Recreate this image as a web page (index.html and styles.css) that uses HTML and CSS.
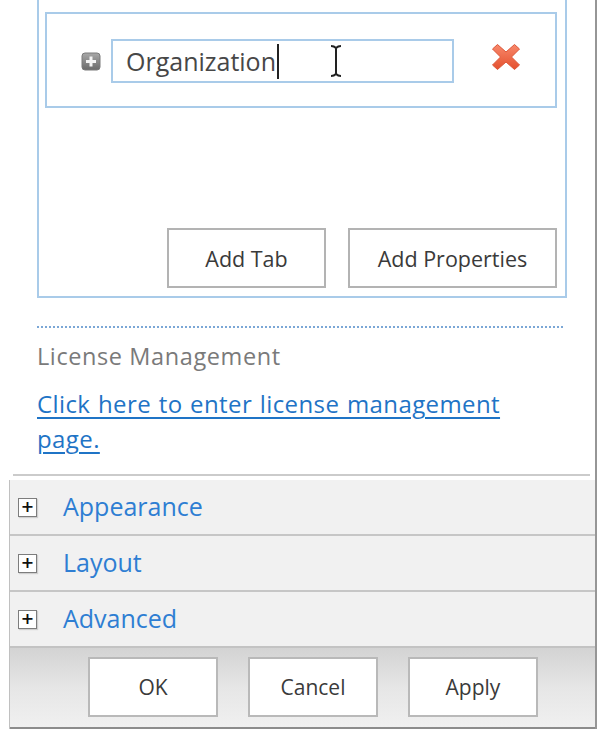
FILE: index.html
```html
<!DOCTYPE html>
<html>
<head>
<meta charset="utf-8">
<link rel="stylesheet" href="styles.css">
</head>
<body>
<div class="panel">
  <div class="tabbox">
    <div class="tabrow">
      <svg class="expand" width="20" height="19" viewBox="0 0 20 19">
        <defs>
          <linearGradient id="gg" x1="0" y1="0" x2="0" y2="1">
            <stop offset="0" stop-color="#a8a8a8"/>
            <stop offset="1" stop-color="#6a6a6a"/>
          </linearGradient>
        </defs>
        <rect x="1" y="1" width="18" height="17" rx="3" fill="url(#gg)" stroke="#7a7a7a" stroke-width="1"/>
        <path d="M8.5 4.5h3v3.5h3.5v3h-3.5v3.5h-3v-3.5h-3.5v-3h3.5z" fill="#f4f4f4"/>
      </svg>
      <div class="field"><span class="fieldtext">Organization</span><span class="caret"></span></div>
      <svg class="remove" width="30" height="28" viewBox="0 0 30 28">
        <defs>
          <linearGradient id="rg" x1="0" y1="0" x2="0" y2="1">
            <stop offset="0" stop-color="#f8886b"/>
            <stop offset="1" stop-color="#e4502e"/>
          </linearGradient>
        </defs>
        <path d="M1.5 6 L6.5 1.5 L15 9 L23.5 1.5 L28.5 6 L20.5 14 L28.5 22 L23.5 26.5 L15 19 L6.5 26.5 L1.5 22 L9.5 14 Z" fill="url(#rg)" stroke="#dc5638" stroke-width="1" stroke-linejoin="round"/>
      </svg>
    </div>
    <div class="tabactions">
      <button class="btn btn-tab">Add Tab</button>
      <button class="btn btn-props">Add Properties</button>
    </div>
  </div>
  <div class="dotted"></div>
  <div class="license">
    <div class="license-title">License Management</div>
    <a class="license-link" href="#">Click here to enter license management page.</a>
  </div>
  <div class="rule"></div>
  <div class="sections">
    <div class="section"><span class="plusbox">+</span><span class="section-label">Appearance</span></div>
    <div class="section"><span class="plusbox">+</span><span class="section-label">Layout</span></div>
    <div class="section"><span class="plusbox">+</span><span class="section-label">Advanced</span></div>
    <div class="footer">
      <button class="btn fbtn">OK</button>
      <button class="btn fbtn">Cancel</button>
      <button class="btn fbtn">Apply</button>
    </div>
  </div>
  <svg class="ibeam" width="14" height="34" viewBox="0 0 14 34">
    <path d="M2 2 Q5 2 7 4 Q9 2 12 2 M7 4 V30 M2 32 Q5 32 7 30 Q9 32 12 32" fill="none" stroke="#222" stroke-width="2"/>
  </svg>
</div>
</body>
</html>
```

FILE: styles.css
```css
html, body {
  margin: 0;
  padding: 0;
  background: #ffffff;
}
body {
  font-family: "Open Sans", "Noto Sans", sans-serif;
  color: #444444;
}
.panel {
  position: relative;
  margin-left: 9px;
  width: 586px;
  height: 729px;
  border-right: 2px solid #969696;
}
.tabbox {
  margin-left: 28px;
  width: 526px;
  height: 276px;
  padding: 12px 0 8px 0;
  border: 2px solid #a9cbe9;
  border-top: 0;
}
.tabrow {
  margin: 0 8px 0 6px;
  height: 92px;
  border: 2px solid #a9cbe9;
  display: flex;
  align-items: center;
  padding-left: 34px;
}
.expand {
  display: block;
  margin-top: 3px;
}
.field {
  margin-left: 10px;
  width: 326px;
  height: 40px;
  border: 2px solid #a9cbe9;
  display: flex;
  align-items: center;
  padding-left: 13px;
  font-size: 25px;
  color: #474747;
  margin-top: 2px;
}
.fieldtext {
  line-height: 30px;
}
.caret {
  display: inline-block;
  width: 2px;
  height: 35px;
  background: #222;
  margin-left: 1px;
}
.remove {
  display: block;
  margin-left: 37px;
  margin-top: -6px;
}
.tabactions {
  display: flex;
  justify-content: flex-end;
  gap: 22px;
  margin-top: 120px;
  padding-right: 8px;
}
.btn {
  font-family: "Open Sans", "Noto Sans", sans-serif;
  background: #ffffff;
  border: 2px solid #b3b3b3;
  color: #3a3a3a;
  font-size: 21px;
  height: 60px;
  padding: 0;
  margin: 0;
}
.btn-tab {
  width: 159px;
  font-size: 21.5px;
}
.btn-props {
  width: 209px;
  font-size: 21.5px;
}
.dotted {
  margin: 28px 0 0 28px;
  width: 526px;
  border-top: 2px dotted #7ba7d6;
}
.license {
  margin-left: 28px;
  padding-top: 13px;
}
.license-title {
  font-size: 23.5px;
  letter-spacing: 0.6px;
  line-height: 30px;
  color: #7a7a7a;
}
.license-link {
  display: block;
  margin-top: 15px;
  width: 500px;
  font-size: 24px;
  letter-spacing: 0.4px;
  word-spacing: 1px;
  line-height: 35px;
  color: #1f74c6;
  text-decoration: underline;
  text-underline-offset: 4px;
}
.rule {
  margin: 18px 5px 0 4px;
  border-top: 2px solid #cbcbcb;
}
.sections {
  margin-top: 4px;
  border-left: 1px solid #c0c0c0;
}
.section {
  height: 54px;
  background: #f1f1f1;
  display: flex;
  align-items: center;
  padding-left: 8px;
}
.section + .section {
  border-top: 2px solid #c6c6c6;
}
.plusbox {
  width: 17px;
  height: 17px;
  border: 1px solid #7d7d7d;
  background: #ffffff;
  box-shadow: 1px 1px 1px #cfcfcf;
  color: #111;
  font-family: "DejaVu Sans", sans-serif;
  font-weight: bold;
  font-size: 16px;
  line-height: 16px;
  text-align: center;
}
.section-label {
  margin-left: 26px;
  font-size: 25px;
  color: #2e7ed3;
  line-height: 30px;
  margin-top: -2px;
}
.footer {
  box-sizing: border-box;
  height: 83px;
  border-top: 2px solid #c3c3c3;
  border-bottom: 2px solid #8c8c8c;
  background: linear-gradient(to bottom, #d3d3d3 0%, #e6e6e6 50%, #f0f0f0 100%);
  display: flex;
  align-items: flex-start;
  gap: 30px;
  padding-left: 78px;
  padding-top: 9px;
}
.fbtn {
  width: 130px;
  height: 60px;
  font-size: 21px;
  border: 2px solid #b9b9b9;
}
.ibeam {
  position: absolute;
  left: 320px;
  top: 44px;
}
```
